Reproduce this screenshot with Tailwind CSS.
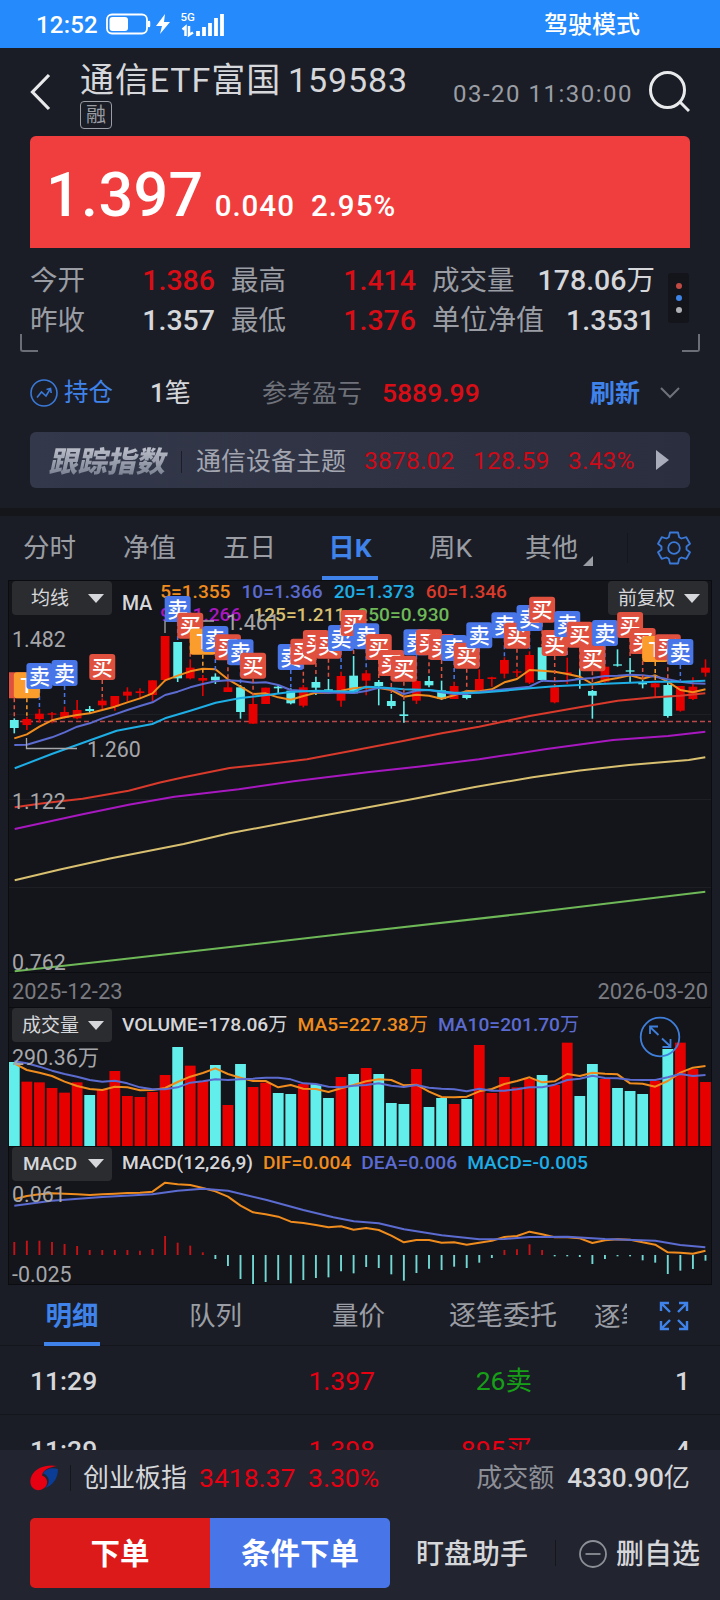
<!DOCTYPE html>
<html lang="zh-CN">
<head>
    <meta charset="UTF-8">
    <meta name="viewport" content="width=device-width, initial-scale=1.0">
    <title>通信ETF富国 159583</title>
    <script src="https://cdn.jsdelivr.net/npm/@tailwindcss/browser@4"></script>
</head>
<body class="bg-[#1a1d26]">
<div class="w-[720px] h-[1600px] overflow-hidden flex flex-col bg-[#1a1d26] text-[#d6d7da] font-['Roboto','Noto_Sans_CJK_SC',sans-serif] whitespace-nowrap leading-none">

    <!-- Status bar -->
    <div class="h-12 shrink-0 bg-[#258afb] text-white flex items-center pt-[2px] pl-[36px] pr-[80px]">
        <span class="text-[24px] font-medium tracking-[0.200px]">12:52</span>
        <svg class="ml-[8px] -mt-[2px]" width="120" height="28" viewBox="0 0 120 28" fill="none">
            <rect x="1" y="4.500" width="40" height="19" rx="5" stroke="#fff" stroke-width="1.800"/>
            <rect x="3.500" y="7" width="18.500" height="14" rx="3" fill="#fff"/>
            <path d="M43 12v4" stroke="#fff" stroke-width="2.500" stroke-linecap="round"/>
            <path d="M59 4 50 16h6l-2 8 10-12h-6z" fill="#fff"/>
            <text x="74.500" y="11" font-size="11.500" font-weight="500" fill="#fff">5G</text>
            <path d="M79.500 26V17l-3 2.500M83 16v9l4-2.500" stroke="#fff" stroke-width="2.500"/>
            <path d="M92 26v-5M98 26v-9M104 26v-13M110 26v-18M116 26v-22" stroke="#fff" stroke-width="3.800"/>
        </svg>
        <span class="ml-auto text-[24px] font-medium">驾驶模式</span>
    </div>

    <!-- Title -->
    <div class="h-[88px] shrink-0 flex px-[30px]">
        <svg class="mt-[25px]" width="22" height="38" viewBox="0 0 22 38" fill="none" stroke="#e8e9eb" stroke-width="3.200"><path d="M19 2 2.500 19 19 36"/></svg>
        <div class="ml-[28px] flex flex-col items-start">
            <div class="mt-[14px] h-[36px] flex items-center text-[34px] tracking-[0.900px]">通信ETF富国<span class="ml-[7px] text-[34px]">159583</span></div>
            <div class="mt-[3px] w-[32px] h-[28px] border border-[#9b9da4] rounded-[4px] text-[20px] text-[#9b9da4] flex items-center justify-center">融</div>
        </div>
        <span class="ml-auto mt-[34px] text-[24px] tracking-[1.500px] text-[#9b9da4]">03-20 11:30:00</span>
        <svg class="ml-[16px] mt-[23px]" width="41" height="44" viewBox="0 0 41 44" fill="none" stroke="#e8e9eb" stroke-width="3"><ellipse cx="18.500" cy="19" rx="17" ry="17.500"/><path d="M31 31l9 9"/></svg>
    </div>

    <!-- Price banner -->
    <div class="h-[112px] shrink-0 mx-[30px] bg-[#f03e3e] rounded-t-[6px] text-white font-medium flex items-baseline pl-[16px] pt-[29px]">
        <span class="text-[61px] tracking-[0.400px]">1.397</span>
        <span class="ml-[11px] text-[29.500px] tracking-[1px]">0.040</span>
        <span class="ml-[16px] text-[29.500px] tracking-[1px]">2.95%</span>
    </div>

    <!-- Quote figures -->
    <div class="h-[106px] shrink-0 relative px-[30px] pt-[13px] text-[27.500px] flex">
        <div class="w-[625px] grid grid-cols-[185px_201px_239px] auto-rows-[40px] items-center text-[#9b9da4]">
            <div class="flex justify-between"><span>今开</span><span class="text-[28.500px] font-medium text-[#d80d16]">1.386</span></div>
            <div class="flex justify-between pl-[16px]"><span>最高</span><span class="text-[28.500px] font-medium text-[#d80d16]">1.414</span></div>
            <div class="flex justify-between pl-[16px]"><span>成交量</span><span class="text-[28.500px] font-medium text-[#d6d7da]">178.06<span class="font-normal">万</span></span></div>
            <div class="flex justify-between"><span>昨收</span><span class="text-[28.500px] font-medium text-[#d6d7da]">1.357</span></div>
            <div class="flex justify-between pl-[16px]"><span>最低</span><span class="text-[28.500px] font-medium text-[#d80d16]">1.376</span></div>
            <div class="flex justify-between pl-[16px]"><span class="text-[28px]">单位净值</span><span class="text-[28.500px] font-medium text-[#d6d7da]">1.3531</span></div>
        </div>
        <div class="ml-[13px] mt-[12px] w-[21px] h-[50px] rounded-[3px] bg-[#14151a] flex flex-col items-center justify-center gap-[6px]">
            <i class="size-[6px] rounded-full bg-[#c24a44]"></i><i class="size-[6px] rounded-full bg-[#3e83e6]"></i><i class="size-[6px] rounded-full bg-[#b0b1b4]"></i>
        </div>
        <i class="absolute left-[20px] top-[86px] w-[18px] h-[18px] border-l-2 border-b-2 border-[#6b6e76] rounded-bl-[3px]"></i>
        <i class="absolute right-[20px] top-[86px] w-[18px] h-[18px] border-r-2 border-b-2 border-[#6b6e76] rounded-br-[3px]"></i>
    </div>

    <!-- Holding -->
    <div class="h-[78px] shrink-0 px-[30px] flex items-center text-[25px]">
        <svg width="28" height="28" viewBox="0 0 28 28" fill="none" stroke="#3a79d8" stroke-width="1.600"><circle cx="14" cy="14" r="13"/><path d="M7 18.500l4.500-5.500 4.500 4 4.500-7.500M16.500 10.500l4-1 .7 4.500"/></svg>
        <span class="ml-[6px] pt-px w-[86px] text-[24.500px] text-[#3f83ea]">持仓</span>
        <span class="w-[112px] text-[26px] font-medium">1<span class="font-normal">笔</span></span>
        <span class="w-[120px] text-[#6f727a]">参考盈亏</span>
        <span class="text-[26.500px] font-medium text-[#d80d16]">5889.99</span>
        <span class="ml-auto font-bold text-[#3f83ea]">刷新</span>
        <svg class="ml-[20px] mr-[10px]" width="20" height="12" viewBox="0 0 20 12" fill="none" stroke="#6f727a" stroke-width="2"><path d="M1 1l9 9 9-9"/></svg>
    </div>
    <div class="h-[56px] shrink-0 mx-[30px] rounded-[6px] bg-linear-to-r from-[#33384a] to-[#2b2e3e] flex items-center pt-[3px] pl-[21px] pr-[21px] text-[25px] text-[#a3a6b0]">
        <span class="w-[130px] text-[29px] font-black -skew-x-12 bg-linear-to-b from-[#c4c7d2] to-[#72788a] bg-clip-text text-transparent leading-[36px]">跟踪指数</span>
        <i class="w-px h-[22px] bg-[#1b1e28] mr-[14px]"></i>
        <span class="w-[168px]">通信设备主题</span>
        <span class="w-[109px] text-[24.500px] tracking-[0.200px] text-[#cc0a18]">3878.02</span>
        <span class="w-[95px] text-[24.500px] tracking-[0.200px] text-[#cc0a18]">128.59</span>
        <span class="text-[24.500px] tracking-[0.200px] text-[#cc0a18]">3.43%</span>
        <svg class="ml-auto -mt-[3px]" width="13" height="20" viewBox="0 0 13 20"><path d="M0 0v20l13-10z" fill="#a9adbb"/></svg>
    </div>
    <div class="h-[8px] mt-[20px] shrink-0 bg-[#14161a]"></div>

    <!-- Period tabs -->
    <div class="h-[64px] shrink-0 flex items-center pl-[23px] text-[26.500px] text-[#9b9da4]">
        <span class="w-[100px] pt-px">分时</span>
        <span class="w-[100px] pt-px">净值</span>
        <span class="w-[99px] pt-px">五日</span>
        <div class="w-[56px] h-full mr-[51px] border-b-4 border-[#3f83ea] pt-[5px] flex items-center justify-center font-bold text-[#3f83ea]">日K</div>
        <span class="w-[96px] pt-px">周K</span>
        <span class="pt-px">其他</span>
        <svg class="mt-[26px] ml-[5px]" width="10" height="10"><path d="M10 0v10H0z" fill="#9b9da4"/></svg>
        <i class="w-px h-[30px] bg-[#14161a] ml-[34px]"></i>
        <svg class="ml-[29px]" width="34" height="34" viewBox="-17 -17 34 34" fill="none" stroke="#3a79d8" stroke-width="1.800" stroke-linejoin="round"><circle r="5.800"/><path d="M-4-15.500H4L5.200-10.800 7.500-9.500 12.300-10.800 16-4.200 12.500-1.500V1.500L16 4.200 12.300 10.800 7.500 9.500 5.200 10.800 4 15.500H-4L-5.200 10.800-7.500 9.500-12.300 10.800-16 4.200-12.500 1.500V-1.500L-16-4.200-12.300-10.800-7.500-9.500-5.200-10.800z"/></svg>
    </div>

    <!-- Charts -->
    <div class="mx-[8px] shrink-0 bg-[#14151a] border-x border-[#0b0c0f] text-[19px]">
        <div class="h-[393px] relative border-y border-[#0b0c0f]">
            <div class="flex items-start px-[3px]">
                <div class="w-[100px] h-[34px] rounded-[4px] bg-[#2b2c30] flex items-center justify-between pl-[19px] pr-[8px]">均线<svg width="16" height="9"><path d="M0 0h16L8 9z" fill="#d6d7da"/></svg></div>
                <span class="ml-[10px] mt-[13px] text-[19.500px] font-medium">MA</span>
                <div class="ml-[8px] -mt-px w-[420px] text-[19.100px] font-medium leading-[23px]">
                    <div class="flex gap-[11px]"><span class="text-[#f08c1e]">5=1.355</span><span class="text-[#5b6bd0]">10=1.366</span><span class="text-[#1eaee6]">20=1.373</span><span class="text-[#d93a2b]">60=1.346</span></div>
                    <div class="flex gap-[12px]"><span class="text-[#a818c0]">90=1.266</span><span class="text-[#d8c070]">125=1.211</span><span class="text-[#6eb858]">250=0.930</span></div>
                </div>
                <div class="ml-auto w-[100px] h-[34px] rounded-[4px] bg-[#2b2c30] flex items-center justify-between pl-[10px] pr-[8px]">前复权<svg width="16" height="9"><path d="M0 0h16L8 9z" fill="#d6d7da"/></svg></div>
            </div>
            <svg id="kline" class="absolute left-0 top-0" width="702" height="392" viewBox="9 581 702 392"></svg>
        </div>
        <div class="h-[34px] pt-[3px] flex items-center justify-between px-[3px] text-[21.900px] text-[#7a7c82]"><span>2025-12-23</span><span>2026-03-20</span></div>
        <div class="h-[139px] relative border-t border-[#0b0c0f]">
            <div class="flex items-start pl-[3px]">
                <div class="w-[100px] h-[34px] rounded-[4px] bg-[#2b2c30] flex items-center justify-between pl-[10px] pr-[8px]">成交量<svg width="16" height="9"><path d="M0 0h16L8 9z" fill="#d6d7da"/></svg></div>
                <div class="ml-[10px] mt-[7px] flex gap-[10px] text-[19.200px] font-medium"><span>VOLUME=178.06<span class="font-normal">万</span></span><span class="text-[#f08c1e]">MA5=227.38<span class="font-normal">万</span></span><span class="text-[#5b6bd0]">MA10=201.70<span class="font-normal">万</span></span></div>
            </div>
            <svg id="volume" class="absolute left-0 top-0" width="702" height="138" viewBox="9 1008 702 138"></svg>
        </div>
        <div class="h-[139px] relative border-y border-[#0b0c0f]">
            <div class="flex items-start pl-[3px]">
                <div class="w-[100px] h-[34px] rounded-[4px] bg-[#2b2c30] flex items-center justify-between pl-[11px] pr-[8px] pb-px font-medium">MACD<svg width="16" height="9"><path d="M0 0h16L8 9z" fill="#d6d7da"/></svg></div>
                <div class="ml-[10px] mt-[6px] flex gap-[10px] text-[19.200px] font-medium"><span>MACD(12,26,9)</span><span class="text-[#f08c1e]">DIF=0.004</span><span class="text-[#5b6bd0]">DEA=0.006</span><span class="text-[#1eaee6]">MACD=-0.005</span></div>
            </div>
            <svg id="macd" class="absolute left-0 top-0" width="702" height="138" viewBox="9 1147 702 138"></svg>
        </div>
    </div>

    <!-- Detail tabs -->
    <div class="h-[61px] shrink-0 flex items-center pl-[44px] text-[26.500px] text-[#9b9da4] border-b border-[#14161c]">
        <div class="w-[56px] h-[61px] mr-[89px] border-b-4 border-[#3f83ea] pt-[6px] flex items-center justify-center font-bold text-[#3f83ea]">明细</div>
        <span class="w-[143px] pt-[3px]">队列</span>
        <span class="w-[117px] pt-[3px]">量价</span>
        <span class="w-[145px] pt-[3px] text-[27px]">逐笔委托</span>
        <span class="w-[33px] pt-[3px] overflow-hidden leading-[40px]">逐笔</span>
        <svg class="ml-[32px] mt-[2px]" width="30" height="30" viewBox="0 0 30 30" fill="none" stroke="#3f83ea" stroke-width="2.400"><path d="M2 10V2h8M2 2l9 9M20 2h8v8M28 2l-9 9M2 20v8h8M2 28l9-9M20 28h8v-8M28 28l-9-9"/></svg>
    </div>

    <!-- Trades -->
    <div class="h-[104px] shrink-0 overflow-hidden text-[26.500px] font-medium">
        <div class="h-[69px] px-[30px] pt-[2px] flex items-center border-b border-[#14161c]">
            <span class="w-[172px]">11:29</span>
            <span class="w-[173px] text-right font-normal text-[#e60012]">1.397</span>
            <span class="w-[157px] text-right font-normal text-[#17a017]">26卖</span>
            <span class="ml-auto">1</span>
        </div>
        <div class="h-[68px] px-[30px] pt-[2px] flex items-center">
            <span class="w-[172px]">11:29</span>
            <span class="w-[173px] text-right font-normal text-[#e60012]">1.398</span>
            <span class="w-[157px] text-right font-normal text-[#e60012]">895买</span>
            <span class="ml-auto">4</span>
        </div>
    </div>

    <!-- Footer -->
    <div class="grow bg-[#22242f] px-[30px]">
        <div class="h-[56px] flex items-center text-[26px]">
            <svg width="28" height="26" viewBox="0 0 28 26">
                <path d="M27 1C16-1 6 3 2 10-1 16 0 22 5 24.500c5 2 11-1 12-6 .8-4-2-7-5-8C13 5 19 2 27 1z" fill="#e60012"/>
                <path d="M28 4C22 2 15 4 13 8.500c4 1 6.500 5 5.500 9C18 20 16.500 21.500 15 23c7-2 13-9 13-19z" fill="#0b3c96"/>
            </svg>
            <i class="ml-[12px] w-px h-[26px] bg-[#14161a]"></i>
            <span class="ml-[12px] w-[116px]">创业板指</span>
            <span class="w-[109px] text-[26.500px] text-[#e60012]">3418.37</span>
            <span class="text-[26.500px] text-[#e60012]">3.30%</span>
            <span class="ml-auto mr-[13px] text-[#8d8f97]">成交额</span>
            <span class="text-[26.200px] font-medium">4330.90<span class="font-normal">亿</span></span>
        </div>
        <div class="mt-[12px] -mr-[10px] h-[70px] flex items-center text-[28px] font-medium">
            <div class="w-[180px] h-full rounded-l-[5px] bg-[#dc1a1a] flex items-center justify-center pt-[3px] text-[29.500px] font-bold text-white">下单</div>
            <div class="w-[180px] h-full rounded-r-[5px] bg-[#4876e8] flex items-center justify-center pt-[3px] text-[29.500px] font-bold text-white">条件下单</div>
            <span class="ml-[26px] pt-[3px]">盯盘助手</span>
            <i class="ml-[27px] w-px h-[26px] bg-[#14161a]"></i>
            <svg class="ml-auto mr-[9px] mt-[2px]" width="28" height="28" viewBox="0 0 28 28" fill="none" stroke="#8d8f97" stroke-width="1.800"><circle cx="14" cy="14" r="13"/><path d="M6.500 14h15"/></svg>
            <span class="pt-[3px]">删自选</span>
        </div>
    </div>
</div>

<script>
    const RED = "#e60000", CYAN = "#62efec", BLUE = "#4876e8", ORANGE = "#f08c1e", INDIGO = "#5b6bd0";
    const x = i => 14.3 + i * 12.567;

    // data is stored in thirds of a pixel from the panel offset
    const y = (v, base) => base + v / 3;
    const line = (pts, color) => `<polyline points="${pts.map(p => p.join(",")).join(" ")}" fill="none" stroke="${color}" stroke-width="2" stroke-linejoin="round"/>`;
    const series = (values, base, color) => line(values.map((v, i) => [x(i), y(v, base)]), color);
    const label = (tx, ty, text, size = 21.4) => `<text x="${tx}" y="${ty}" font-size="${size}" fill="#a5a6aa">${text}</text>`;

    // [color, high, top, bottom, low]
    const candles = [
        ["c",655,660,684,700],["r",650,657,675,690],["r",627,641,657,668],["r",636,640,644,670],["r",620,636,654,656],["r",600,630,655,658],["c",618,627,633,642],
        ["r",595,602,616,628],["r",588,588,620,632],["r",562,575,587,604],["r",565,574,579,598],["r",541,541,585,605],["r",408,408,540,545],["c",426,426,535,546],
        ["r",478,503,535,538],["r",525,534,542,588],["c",520,530,541,552],["r",540,562,576,576],["c",555,562,636,656],["r",590,612,671,671],["r",563,563,612,612],
        ["c",555,560,565,580],["c",565,572,610,613],["r",555,562,617,622],["c",530,546,563,585],["c",537,568,573,577],["r",515,528,602,620],["c",468,527,580,580],
        ["r",510,520,542,586],["c",540,546,558,616],["c",582,603,618,626],["c",604,643,648,668],["r",540,543,602,612],["c",528,543,556,562],["c",542,571,597,600],
        ["r",545,558,597,597],["c",575,585,594,598],["r",508,537,570,572],["r",530,532,537,560],["r",472,480,521,535],["r",508,514,518,532],["r",454,465,548,552],
        ["c",442,442,540,545],["r",560,562,607,610],["r",473,517,522,552],["c",505,535,540,566],["c",570,573,587,656],["r",500,500,545,548],["c",448,493,497,500],
        ["c",474,511,515,548],["c",540,548,553,565],["r",548,550,562,592],["c",543,555,648,653],["r",558,558,632,635],["r",532,560,597,600],["r",478,503,518,530]
    ];
    // [day, top, kind]
    const marks = [
        [0,517,"e"],[1,517,"t"],[2,489,"b"],[4,480,"b"],[7,462,"r"],[13,288,"b"],[14,338,"r"],[15,386,"t"],[16,378,"b"],[17,403,"r"],[18,418,"b"],[19,458,"r"],
        [22,432,"b"],[23,416,"r"],[24,390,"r"],[25,398,"r"],[26,375,"b"],[27,330,"r"],[28,370,"b"],[29,402,"r"],[30,450,"r"],[31,467,"r"],[32,388,"b"],[33,388,"r"],
        [34,402,"r"],[35,405,"b"],[36,428,"r"],[37,367,"b"],[39,337,"b"],[40,368,"r"],[41,315,"b"],[42,290,"r"],[43,390,"r"],[44,333,"b"],[45,365,"r"],[46,436,"r"],
        [47,360,"b"],[49,336,"r"],[50,384,"r"],[51,408,"t"],[52,403,"r"],[53,417,"b"]
    ];
    const kinds = { r: ["#e0503f", "买"], e: ["#e0503f", ""], b: [BLUE, "卖"], t: ["#fb9d2c", "T"] };

    let k = "";
    [714, 799, 887].forEach(g => k += `<path d="M9 ${g}.5H711" stroke="#1e1f25"/>`);
    k += `<path d="M12 721.500H711" stroke="#b8494b" stroke-width="1.300" stroke-dasharray="5 3"/>`;
    candles.forEach(([c, h, t, b, l], i) => {
        const fill = c === "r" ? RED : CYAN;
        k += `<path d="M${x(i)} ${y(h, 500)}V${y(l, 500)}" stroke="${fill}" stroke-width="1.600"/>`;
        k += `<rect x="${x(i) - 4.4}" y="${y(t, 500)}" width="8.800" height="${(b - t) / 3}" fill="${fill}"/>`;
    });
    k += series([715,703,680,661,652,645,640,630,620,607,595,580,541,527,514,506,508,538,560,582,580,592,599,588,578,578,572,565,562,564,570,590,584,587,596,586,573,574,568,547,537,510,512,515,522,530,552,541,534,526,536,526,545,570,577,568], 500, ORANGE);
    k += series([735,734,723,712,697,680,670,655,643,630,618,607,585,575,562,552,544,541,543,548,547,555,570,572,576,578,578,579,573,563,566,582,572,570,577,582,582,576,572,568,564,560,542,544,542,537,534,528,527,524,526,530,538,545,550,551], 500, INDIGO);
    k += line([[14.7,768.3],[51.7,754],[81.7,743.3],[116.7,730.7],[152.3,724],[165,718.3],[190.3,710.7],[215.7,702.7],[240.7,698],[266.7,695],[290.7,692],[316.7,690.7],[353.7,691.7],[366,686.7],[378.700,687.300],[404,689.3],[429,690],[454.300,692.700],[479.3,692.7],[504.3,690.7],[529.7,688.3],[554.7,686.3],[579.7,685],[605,683.7],[630,682.7],[655.3,681.7],[680.3,681.7],[705.3,680.7]], "#1eaee6");
    k += line([[14.7,807.3],[45,803],[82.6,798.7],[128.6,790.7],[160,782.5],[183.7,777.3],[229.6,768],[266,764.3],[307,759.3],[360,749.3],[403,741],[441.7,733.3],[479,726.7],[529.7,716],[579.7,707.3],[617.7,700.7],[655,697.3],[680,695.7],[705.3,693.3]], "#d93a2b");
    k += line([[14.7,829],[82.6,814.3],[130,804.500],[174.5,796.7],[238.7,789.3],[293.8,781.3],[367.3,772.3],[420,766.500],[479,759.3],[546.7,749],[613,740],[668,736],[705.3,731.7]], "#a818c0");
    k += line([[14.7,880.3],[60,869.500],[110,858.500],[183.7,844],[229.6,833.3],[321,816],[413,799],[475,787],[532.6,777.3],[580,770.500],[629,765],[688.7,760],[705.3,757.3]], "#d8c070");
    k += line([[14.7,971.3],[120,959.500],[230,947],[349,933.3],[520,914],[705.3,891.7]], "#6eb858");
    marks.forEach(([i, t, kind]) => {
        k += `<path d="M${x(i)} ${y(t + 78, 500)}V${y(candles[i][1], 500) - 1}" stroke="${kinds[kind][0]}" stroke-width="1.500" stroke-dasharray="4 3"/>`;
    });
    k += `<path d="M165 633V621H214M26.500 738V748.500H77" fill="none" stroke="#a5a6aa" stroke-width="1.300"/>`;
    marks.forEach(([i, t, kind]) => {
        const [fill, char] = kinds[kind];
        k += `<rect x="${x(i) - 13}" y="${y(t, 500)}" width="26" height="26" rx="3" fill="${fill}"/>`;
        if (char) k += `<text x="${x(i)}" y="${y(t, 500) + 20.5}" font-size="21" font-weight="500" text-anchor="middle" fill="#fff">${char}</text>`;
    });
    k += label(12, 647, "1.482") + label(226, 629.5, "1.461") + label(87, 756.5, "1.260") + label(12, 808.5, "1.122") + label(12, 969.5, "0.762");
    document.getElementById("kline").innerHTML = k;

    // volume
    const volTop = [186,245,247,264,278,247,285,268,213,288,291,276,225,141,197,243,195,315,192,261,248,279,282,252,252,294,231,222,204,222,309,312,207,321,294,312,297,135,279,231,262,237,225,255,128,288,192,237,264,273,282,242,147,128,207,246];
    const volCyan = [0,6,13,16,18,21,22,24,25,27,29,30,31,33,34,36,42,45,46,48,49,50,52];
    let v = "";
    volTop.forEach((t, i) => {
        v += `<rect x="${x(i) - 5.4}" y="${y(t, 1000)}" width="10.800" height="${(438 - t) / 3}" fill="${volCyan.includes(i) ? CYAN : RED}"/>`;
    });
    v += series([190,210,218,228,245,258,267,270,260,262,271,270,264,246,230,219,205,222,233,243,243,262,255,266,267,276,265,255,244,238,240,256,254,275,291,292,290,274,267,252,243,232,247,244,222,228,218,221,223,250,251,260,243,218,203,198], 1000, ORANGE);
    v += series([184,190,200,212,222,230,240,245,242,250,262,268,268,262,248,244,238,240,238,236,233,233,238,250,252,260,262,257,255,250,257,261,255,263,266,268,274,266,272,272,268,262,262,254,240,236,227,234,235,239,240,240,232,222,228,225], 1000, INDIGO);
    v += label(12, 1065, "290.36万");
    v += `<g fill="none" stroke="#3f7fdc" stroke-width="1.800"><circle cx="660" cy="1037" r="19.300"/><path d="M650 1034v-7.500h8M650 1027l8.500 8M662 1038.500l8.500 8M662.500 1047h8V1039"/></g>`;
    document.getElementById("volume").innerHTML = v;

    // macd
    const hist = [726,722,722,726,732,738,750,750,750,750,752,747,708,728,737,757,777,798,837,852,846,840,850,840,834,832,814,820,801,804,823,842,819,806,810,800,804,788,774,750,748,733,750,769,769,771,792,777,769,769,781,788,822,812,807,782];
    let m = "";
    hist.forEach((h, i) => m += `<path d="M${x(i)} 1255V${y(h, 1000)}" stroke="${h < 765 ? "#c41216" : "#72d8d3"}" stroke-width="1.900"/>`);
    m += series([598,588,583,580,581,583,585,583,581,579,578,575,548,553,555,564,574,590,617,637,643,650,665,669,675,682,679,689,684,690,707,727,720,720,728,727,734,728,722,711,708,695,703,712,712,715,729,721,718,719,727,734,757,758,761,752], 1000, ORANGE);
    m += line([[14.3,1205.7],[51.7,1200.7],[102.3,1197],[152.3,1194.3],[177.7,1190.7],[203,1188.7],[228,1190.7],[266.7,1200],[303.3,1210],[333.3,1217.3],[353.7,1221.3],[378.7,1223.3],[404,1229.3],[441.7,1235.3],[479.3,1239.3],[504.3,1239],[529.7,1237],[567.300,1236.700],[605,1239],[655.3,1240.7],[680.3,1245],[705.3,1247.3]], INDIGO);
    m += label(12, 1201.5, "0.061") + label(12, 1281.5, "-0.025");
    document.getElementById("macd").innerHTML = m;
</script>
</body>
</html>
